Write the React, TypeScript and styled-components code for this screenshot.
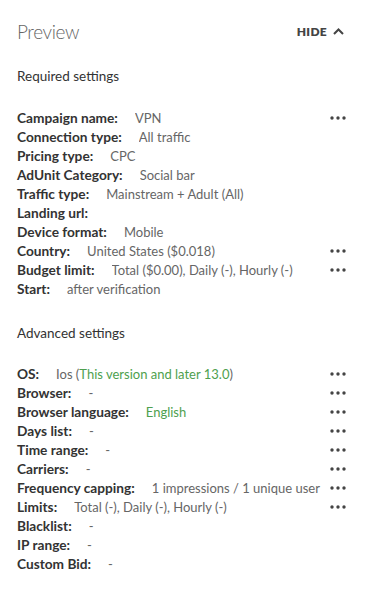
import React from 'react'
import styled, { createGlobalStyle } from 'styled-components'

const GlobalStyle = createGlobalStyle`
  body {
    margin: 0;
    background: #fff;
    font-family: Lato, "Open Sans", sans-serif;
  }
`

const Panel = styled.div`
  width: 365px;
  box-sizing: border-box;
  padding: 19px 19px 20px 17px;
`

const Header = styled.div`
  display: flex;
  align-items: center;
  justify-content: space-between;
  height: 24px;
`

const Title = styled.div`
  font-size: 19px;
  font-weight: 300;
  letter-spacing: -0.4px;
  color: #666;
`

const HideButton = styled.div`
  display: flex;
  align-items: center;
  gap: 6px;
  font-size: 12px;
  font-weight: 800;
  color: #444;
  letter-spacing: 0.3px;
  margin-right: 2px;
`

const SectionTitle = styled.div<{ $top: number; $bottom: number }>`
  font-size: 13.5px;
  line-height: 18px;
  color: #333;
  margin: ${(p) => p.$top}px 0 ${(p) => p.$bottom}px;
`

const List = styled.div`
  display: flex;
  flex-direction: column;
`

const Row = styled.div`
  display: flex;
  align-items: center;
  height: 19px;
  font-size: 13px;
`

const Label = styled.span`
  font-size: 13.7px;
  font-weight: 700;
  color: #333;
  white-space: nowrap;
  margin-right: 17px;
`

const Value = styled.span<{ $green?: boolean }>`
  flex: 1;
  min-width: 0;
  overflow: hidden;
  white-space: nowrap;
  color: ${(p) => (p.$green ? '#4e9f4e' : '#666')};
`

const Green = styled.span`
  color: #4e9f4e;
`

const More = styled.div`
  width: 16px;
  display: flex;
  justify-content: flex-end;
  flex-shrink: 0;
  margin-left: 2px;
`

const Dots = () => (
  <svg width="16" height="4" viewBox="0 0 16 4">
    <circle cx="2" cy="2" r="1.7" fill="#444" />
    <circle cx="8" cy="2" r="1.7" fill="#444" />
    <circle cx="14" cy="2" r="1.7" fill="#444" />
  </svg>
)

interface Setting {
  label: string
  value: React.ReactNode
  green?: boolean
  more?: boolean
}

const required: Setting[] = [
  { label: 'Campaign name:', value: 'VPN', more: true },
  { label: 'Connection type:', value: 'All traffic' },
  { label: 'Pricing type:', value: 'CPC' },
  { label: 'AdUnit Category:', value: 'Social bar' },
  { label: 'Traffic type:', value: 'Mainstream + Adult (All)' },
  { label: 'Landing url:', value: '' },
  { label: 'Device format:', value: 'Mobile' },
  { label: 'Country:', value: 'United States ($0.018)', more: true },
  { label: 'Budget limit:', value: 'Total ($0.00), Daily (-), Hourly (-)', more: true },
  { label: 'Start:', value: 'after verification' },
]

const advanced: Setting[] = [
  {
    label: 'OS:',
    value: (
      <>
        Ios (<Green>This version and later 13.0</Green>)
      </>
    ),
    more: true,
  },
  { label: 'Browser:', value: '-', more: true },
  { label: 'Browser language:', value: 'English', green: true, more: true },
  { label: 'Days list:', value: '-', more: true },
  { label: 'Time range:', value: '-', more: true },
  { label: 'Carriers:', value: '-', more: true },
  { label: 'Frequency capping:', value: '1 impressions / 1 unique user', more: true },
  { label: 'Limits:', value: 'Total (-), Daily (-), Hourly (-)', more: true },
  { label: 'Blacklist:', value: '-' },
  { label: 'IP range:', value: '-' },
  { label: 'Custom Bid:', value: '-' },
]

const SettingsList = ({ items }: { items: Setting[] }) => (
  <List>
    {items.map((s) => (
      <Row key={s.label}>
        <Label>{s.label}</Label>
        <Value $green={s.green}>{s.value}</Value>
        {s.more && (
          <More>
            <Dots />
          </More>
        )}
      </Row>
    ))}
  </List>
)

const App: React.FC = () => {
  return (
    <Panel>
      <GlobalStyle />
      <Header>
        <Title>Preview</Title>
        <HideButton>
          HIDE
          <svg width="11" height="7" viewBox="0 0 11 7">
            <path d="M1 6 L5.5 1.5 L10 6" fill="none" stroke="#444" strokeWidth="2" />
          </svg>
        </HideButton>
      </Header>
      <SectionTitle $top={24} $bottom={23}>Required settings</SectionTitle>
      <SettingsList items={required} />
      <SectionTitle $top={26} $bottom={22}>Advanced settings</SectionTitle>
      <SettingsList items={advanced} />
    </Panel>
  )
}

export default App
